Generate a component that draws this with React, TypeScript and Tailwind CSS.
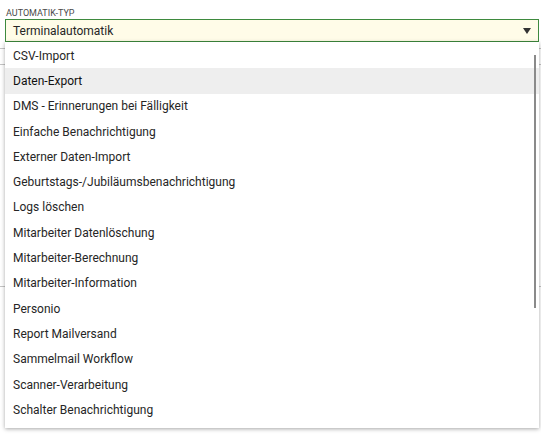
import React from 'react';

const options = [
  'CSV-Import',
  'Daten-Export',
  'DMS - Erinnerungen bei Fälligkeit',
  'Einfache Benachrichtigung',
  'Externer Daten-Import',
  'Geburtstags-/Jubiläumsbenachrichtigung',
  'Logs löschen',
  'Mitarbeiter Datenlöschung',
  'Mitarbeiter-Berechnung',
  'Mitarbeiter-Information',
  'Personio',
  'Report Mailversand',
  'Sammelmail Workflow',
  'Scanner-Verarbeitung',
  'Schalter Benachrichtigung',
];

export default function App() {
  const active = 'Daten-Export';

  return (
    <div className="w-[541px] h-[434px] overflow-hidden bg-white font-['Roboto','Liberation_Sans',sans-serif] text-[#262626]">
      <div className="pt-[7px] pl-[5px] pr-[2px]">
        <label className="block pl-[1px] text-[9px] leading-[12px] uppercase text-[#4a4a4a]">
          Automatik-Typ
        </label>
        <div className="relative">
          <div className="flex items-center justify-between h-[23px] border border-[#3e8a3e] bg-[#fffce8] pl-[7px] pr-[7px]">
            <span className="text-[12px]">Terminalautomatik</span>
            <svg width="8" height="6" viewBox="0 0 8 6" className="mt-[1px]">
              <path d="M0 0H8L4 6Z" fill="#333" />
            </svg>
          </div>

          {/* form rows underneath, mostly hidden by the open menu */}
          <div className="-ml-[5px] -mr-[2px] flex flex-col">
            <div className="h-[6px]" />
            <div className="h-[16px] border-t border-[#c4c4c4]" />
            <div className="h-[222px] border-t border-[#c4c4c4]" />
            <div className="border-t border-[#c4c4c4]" />
          </div>

          <div className="absolute left-0 top-[23px] w-[534px] h-[386px] bg-white shadow-[0_1px_4px_rgba(0,0,0,0.35)] pt-[1px]">
            <ul>
              {options.map((o) => (
                <li
                  key={o}
                  className={`flex items-center h-[25.3px] pl-[8px] text-[12px] ${
                    o === active ? 'bg-[#eeeeee] text-[#111]' : ''
                  }`}
                >
                  {o}
                </li>
              ))}
            </ul>
            <div className="absolute right-[3px] top-[13px] w-[2px] h-[253px] bg-[#8a8a8a]" />
          </div>
        </div>
      </div>
    </div>
  );
}
